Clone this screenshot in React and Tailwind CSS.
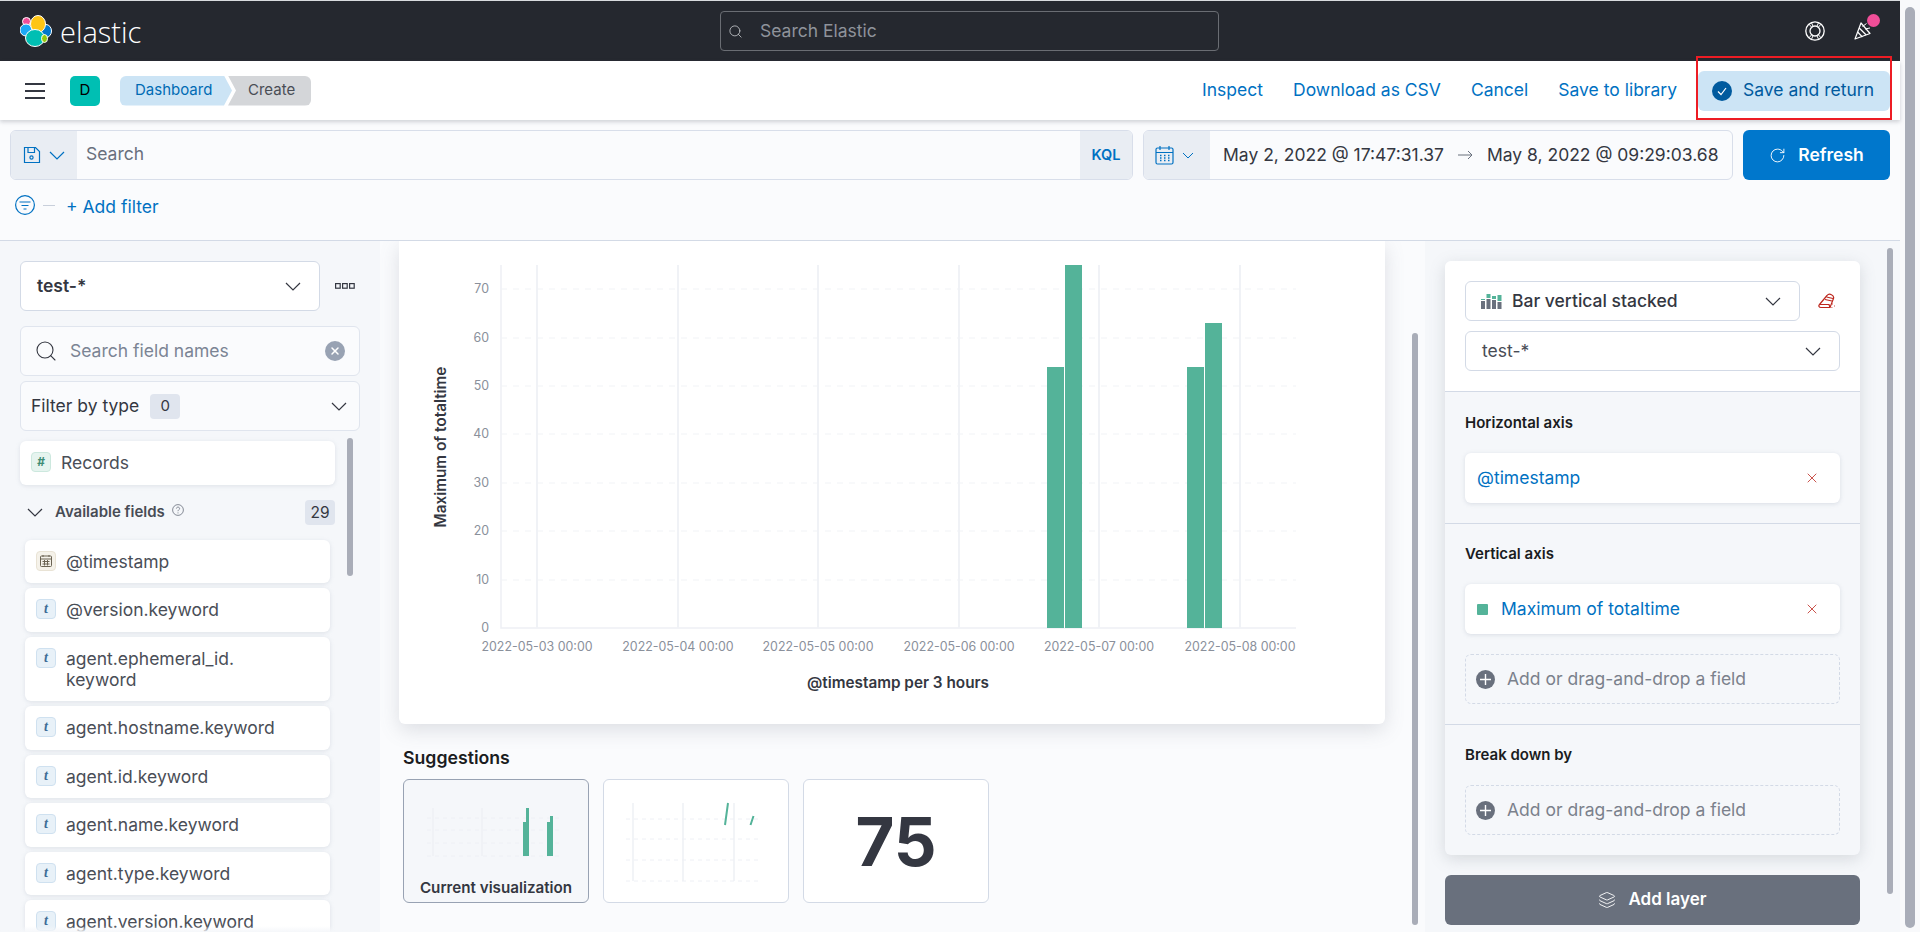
import { RotateCw, Layers, X, Search } from 'lucide-react'

const fields = [
  { name: 'agent.hostname.keyword', h: 'h-[44px]' },
  { name: 'agent.id.keyword', h: 'h-[43px]' },
  { name: 'agent.name.keyword', h: 'h-[44px]' },
  { name: 'agent.type.keyword', h: 'h-[43px]' },
  { name: 'agent.version.keyword', h: 'h-[44px]' },
]

const yTicks = [[70, 289], [60, 338], [50, 386], [40, 434], [30, 483], [20, 531], [10, 580]]
const xTicks = [
  [537, '2022-05-03 00:00'],
  [678, '2022-05-04 00:00'],
  [818, '2022-05-05 00:00'],
  [959, '2022-05-06 00:00'],
  [1099, '2022-05-07 00:00'],
  [1240, '2022-05-08 00:00'],
]
const bars = [[1047, 367], [1065, 265], [1187, 367], [1205, 323]]

function Chevron({ className = 'text-[#343741]' }) {
  return (
    <svg width="16" height="9" viewBox="0 0 16 9" fill="none" stroke="currentColor" strokeWidth="1.2" className={className}>
      <path d="M1 1l7 7 7-7" />
    </svg>
  )
}

function ElasticLogo() {
  return (
    <svg width="32" height="32" viewBox="0 0 32 32" className="shrink-0">
      <g stroke="#fff" strokeWidth="1">
        <ellipse cx="6.5" cy="6.5" rx="4" ry="4" fill="#f04e98" />
        <ellipse cx="6" cy="15" rx="6" ry="6" fill="#1ba9f5" />
        <ellipse cx="26" cy="16" rx="5.5" ry="6.5" fill="#0077cc" />
        <ellipse cx="18" cy="9" rx="7.5" ry="8.5" fill="#fec514" />
        <ellipse cx="15" cy="23" rx="9.5" ry="8.5" fill="#00bfb3" />
        <ellipse cx="24.5" cy="23.5" rx="3" ry="4" fill="#93c90e" />
      </g>
    </svg>
  )
}

function HelpRing() {
  return (
    <svg width="20" height="20" viewBox="0 0 20 20" fill="none" stroke="#fff" strokeWidth="1.3">
      <circle cx="10" cy="10" r="9.2" />
      <circle cx="10" cy="10" r="5" />
      <path d="M4 3.2l2.800 3.200M16 3.200l-2.800 3.200M4 16.800l2.800-3.200M16 16.800l-2.800-3.200M6.500 1.800l1.600 3.600M13.500 1.800l-1.600 3.600M6.500 18.200l1.600-3.600M13.500 18.200l-1.600-3.600" strokeWidth="1" />
    </svg>
  )
}

function CheerIcon() {
  return (
    <svg width="20" height="20" viewBox="0 0 20 20" fill="none" stroke="#fff" strokeWidth="1.2" strokeLinejoin="round">
      <path d="M8 2L2 18l15-5.500z" />
      <path d="M6.200 7l7 7M4.600 11l4.800 5" />
      <path d="M9.500 5.500l4-3M12 8l5-1" strokeWidth="1" />
    </svg>
  )
}

function SaveIcon() {
  return (
    <svg width="18" height="18" viewBox="0 0 18 18" fill="none" stroke="#0071c2" strokeWidth="1.2">
      <path d="M1.500 1.500h11l4 4v11h-15z" />
      <path d="M5 1.500v5h6.500v-5" />
      <circle cx="8.500" cy="11.500" r="1.600" />
    </svg>
  )
}

function CalendarIcon() {
  return (
    <svg width="19" height="20" viewBox="0 0 19 20" fill="none" stroke="#0071c2" strokeWidth="1.2">
      <rect x="1" y="3" width="17" height="16" rx="1.500" />
      <path d="M1 7.500h17M5 1v4M14 1v4" />
      <path d="M5 10.500h1.500M9 10.500h1.500M13 10.500h1.500M5 13h1.500M9 13h1.500M13 13h1.500M5 15.500h1.500M9 15.500h1.500M13 15.500h1.500" strokeWidth="1.3" />
    </svg>
  )
}

function FilterIcon() {
  return (
    <svg width="20" height="20" viewBox="0 0 20 20" fill="none" stroke="#0071c2" strokeWidth="1.2">
      <circle cx="10" cy="10" r="9.400" />
      <path d="M4.500 7h11M6.500 10.500h7M8.500 14h3" />
    </svg>
  )
}

function FieldIcon({ kind = 't' }) {
  if (kind === 'date') {
    return (
      <span className="flex h-[20px] w-[20px] shrink-0 items-center justify-center rounded-[4px] border border-[#e9e3d5] bg-[#f5f2ea]">
        <svg width="14" height="14" viewBox="0 0 14 14" fill="none" stroke="#6a6353" strokeWidth="1">
          <rect x="1.500" y="2" width="11" height="10.500" rx="1" />
          <path d="M1.500 5h11M4 1v2M10 1v2M3.500 7.500h7M3.500 10h7M5.500 6v5.500M8.500 6v5.500" />
        </svg>
      </span>
    )
  }
  if (kind === 'num') {
    return (
      <span className="flex h-[20px] w-[20px] shrink-0 items-center justify-center rounded-[4px] border border-[#cce8de] bg-[#e6f4ef] text-[12px] font-bold italic leading-none text-[#3f8c74]">
        #
      </span>
    )
  }
  return (
    <span className="flex h-[20px] w-[20px] shrink-0 items-center justify-center rounded-[4px] border border-[#cfe1f0] bg-[#e8f1f8] font-['Liberation_Serif',serif] text-[14px] font-bold italic leading-none text-[#3d6d96]">
      t
    </span>
  )
}

function FieldRow({ name, kind, h = 'h-[44px]' }) {
  return (
    <div className={`flex ${h} gap-[10px] rounded-[6px] bg-white pl-[11px] pt-[11px] shadow-[0_1px_4px_rgba(152,162,179,0.25)]`}>
      <FieldIcon kind={kind} />
      <span className="text-[17.5px] leading-[21px] text-[#4a4e57]">{name}</span>
    </div>
  )
}

function DropZone() {
  return (
    <div className="flex h-[50px] items-center gap-[12px] rounded-[6px] border border-dashed border-[#d3dae6] pl-[10px] text-[17.5px] text-[#7b818c]">
      <span className="flex h-[19px] w-[19px] items-center justify-center rounded-full bg-[#69707d]">
        <svg width="11" height="11" viewBox="0 0 11 11" stroke="#fff" strokeWidth="1.4"><path d="M5.500 0v11M0 5.500h11" /></svg>
      </span>
      Add or drag-and-drop a field
    </div>
  )
}

function Dimension({ children, color }) {
  return (
    <div className="flex h-[50px] items-center justify-between rounded-[6px] bg-white pl-[12px] pr-[20px] text-[17.5px] text-[#0071c2] shadow-[0_1px_4px_rgba(152,162,179,0.3)]">
      <span className="flex items-center gap-[13px]">
        {color && <span className="h-[11px] w-[11px] rounded-[1px] bg-[#54b399]" />}
        {children}
      </span>
      <X size={16} strokeWidth={1.2} className="text-[#bd271e]" />
    </div>
  )
}

function MainChart() {
  return (
    <svg viewBox="399 241 986 483" width="986" height="483" className="block font-['Inter',sans-serif]">
      <path d="M501 265V628H1296" fill="none" stroke="#eef0f5" strokeWidth="1.5" />
      {yTicks.map(([label, y]) => (
        <g key={label}>
          <line x1="501" x2="1296" y1={y} y2={y} stroke="#f1f3f6" strokeDasharray="6 6" />
          <text x="489" y={y + 4} textAnchor="end" fontSize="12.4" fill="#8a909b">{label}</text>
        </g>
      ))}
      <text x="489" y="632" textAnchor="end" fontSize="12.4" fill="#8a909b">0</text>
      {xTicks.map(([x, label]) => (
        <g key={label}>
          <line x1={x} x2={x} y1="265" y2="628" stroke="#f0f2f6" strokeWidth="2" />
          <text x={x} y="651" textAnchor="middle" fontSize="12.4" fill="#8a909b">{label}</text>
        </g>
      ))}
      {bars.map(([x, y]) => (
        <rect key={x} x={x} y={y} width="17" height={628 - y} fill="#54b399" />
      ))}
      <text transform="translate(446 447) rotate(-90)" textAnchor="middle" fontSize="15.3" fontWeight="600" fill="#343741">Maximum of totaltime</text>
      <text x="898" y="688" textAnchor="middle" fontSize="15.3" fontWeight="600" fill="#343741">@timestamp per 3 hours</text>
    </svg>
  )
}

function MiniBars() {
  return (
    <svg width="184" height="78" viewBox="404 780 184 78" className="block">
      <path d="M433 808v48M482 808v48" stroke="#eef0f5" strokeWidth="1.5" />
      <path d="M427 818h135M427 830h135M427 843h135M427 856h135" stroke="#eef0f5" strokeDasharray="4 4" />
      <rect x="523" y="822" width="3" height="34" fill="#54b399" />
      <rect x="526" y="808" width="3" height="48" fill="#54b399" />
      <rect x="547" y="822" width="3" height="34" fill="#54b399" />
      <rect x="550" y="816" width="3" height="40" fill="#54b399" />
    </svg>
  )
}

function MiniLines() {
  return (
    <svg width="184" height="122" viewBox="604 780 184 122" className="block">
      <path d="M633 803v78M683 803v78M734 803v78" stroke="#eef0f5" strokeWidth="1.5" />
      <path d="M626 819h136M626 839h136M626 860h136M626 881h136" stroke="#eef0f5" strokeDasharray="4 4" />
      <path d="M725 825l3-22M750.500 825l3-9" stroke="#54b399" strokeWidth="2" />
    </svg>
  )
}

function Scrollbar({ className }) {
  return <div className={`absolute w-[6px] rounded-full bg-[#a9adb8] ${className}`} />
}

export default function App() {
  return (
    <div className="relative flex h-[932px] w-[1920px] overflow-hidden bg-[#f8f9fb] font-['Inter',sans-serif] text-[#343741]">
      <div className="flex w-[1900px] flex-col">
        {/* Top bar */}
        <header className="flex h-[61px] shrink-0 items-center justify-between border-t border-[#d9dbde] bg-[#25282f] pl-[20px] pr-[15px]">
          <div className="flex w-[700px] items-center gap-[8px]">
            <ElasticLogo />
            <span className="font-['Open_Sans',sans-serif] text-[29px] font-light leading-none text-white">elastic</span>
          </div>
          <div className="flex h-[40px] w-[499px] items-center gap-[17px] rounded-[4px] border border-[#6a6d73] pl-[7px] text-[17.5px] text-[#8f939b]">
            <Search size={15} strokeWidth={1.3} className="text-[#c9cbcf]" />
            Search Elastic
          </div>
          <div className="flex w-[666px] items-center justify-end gap-[28px] pr-[12px]">
            <HelpRing />
            <span className="relative block h-[20px] w-[20px]">
              <CheerIcon />
              <span className="absolute -right-[7px] -top-[7px] h-[13px] w-[13px] rounded-full bg-[#f04e98]" />
            </span>
          </div>
        </header>

        {/* App nav */}
        <nav className="relative z-10 flex h-[59px] shrink-0 items-center justify-between bg-white pl-[25px] pr-[10px] shadow-[0_2px_4px_rgba(105,112,125,0.3)]">
          <div className="flex items-center">
            <div className="flex w-[20px] flex-col gap-[5px]">
              <span className="h-[2px] bg-[#343741]" />
              <span className="h-[2px] bg-[#343741]" />
              <span className="h-[2px] bg-[#343741]" />
            </div>
            <span className="ml-[25px] flex h-[30px] w-[30px] items-center justify-center rounded-[5px] bg-[#00bfb3] text-[15px] text-black">D</span>
            <div className="ml-[20px] flex h-[30px] text-[15px]">
              <span className="flex w-[112px] items-center rounded-l-[6px] bg-[#cce4f5] pl-[15px] text-[#006bb4] [clip-path:polygon(0_0,104px_0,112px_50%,104px_100%,0_100%)]">Dashboard</span>
              <span className="-ml-[4px] flex w-[83px] items-center rounded-r-[6px] bg-[#d4d6d9] pl-[20px] text-[#494d55] [clip-path:polygon(0_0,100%_0,100%_100%,0_100%,8px_50%)]">Create</span>
            </div>
          </div>
          <div className="flex items-center text-[17.5px] text-[#0071c2]">
            <span>Inspect</span>
            <span className="ml-[30px]">Download as CSV</span>
            <span className="ml-[30px]">Cancel</span>
            <span className="ml-[30px]">Save to library</span>
            <span className="ml-[21px] flex h-[40px] w-[192px] items-center gap-[11px] rounded-[6px] bg-[#cce4f5] pl-[14px] text-[#005a9e]">
              <svg width="20" height="20" viewBox="0 0 20 20" className="shrink-0">
                <circle cx="10" cy="10" r="10" fill="#005a9e" />
                <path d="M6 10.500l3 3 5-6.500" fill="none" stroke="#fff" strokeWidth="1.2" />
              </svg>
              Save and return
            </span>
          </div>
        </nav>

        {/* Query bar */}
        <section className="h-[121px] shrink-0 border-b border-[#d3dae6] bg-[#fafbfd] px-[10px] pt-[10px]">
          <div className="flex h-[50px] gap-[10px]">
            <div className="flex w-[1123px] overflow-hidden rounded-[6px] border border-[#d8deea]">
              <div className="flex w-[66px] items-center gap-[8px] bg-[#e9edf3] pl-[12px]">
                <SaveIcon />
                <Chevron className="text-[#0071c2]" />
              </div>
              <div className="flex flex-1 items-center pb-[2px] pl-[9px] text-[17.5px] text-[#69707d]">Search</div>
              <div className="flex w-[52px] items-center justify-center bg-[#e9edf3] text-[14.5px] font-semibold text-[#0071c2]">KQL</div>
            </div>
            <div className="flex w-[590px] overflow-hidden rounded-[6px] border border-[#d8deea]">
              <div className="flex w-[66px] items-center gap-[8px] bg-[#e9edf3] pl-[11px]">
                <CalendarIcon />
                <svg width="12" height="7" viewBox="0 0 12 7" fill="none" stroke="#0071c2" strokeWidth="1"><path d="M1 1l5 5 5-5" /></svg>
              </div>
              <div className="flex flex-1 items-center pl-[13px] text-[17.5px] text-[#343741]">
                <span>May 2, 2022 @ 17:47:31.37</span>
                <svg width="15" height="10" viewBox="0 0 15 10" fill="none" stroke="#69707d" className="mx-[14px] shrink-0"><path d="M0 5h14M10 1l4 4-4 4" /></svg>
                <span>May 8, 2022 @ 09:29:03.68</span>
              </div>
            </div>
            <div className="flex w-[147px] items-center justify-center gap-[12px] rounded-[6px] bg-[#0077cc] text-[17.5px] font-semibold text-white">
              <RotateCw size={17} strokeWidth={1.3} />
              Refresh
            </div>
          </div>
          <div className="mt-[15px] flex h-[20px] items-center pl-[5px]">
            <FilterIcon />
            <span className="ml-[8px] h-[1px] w-[12px] bg-[#c8cfdb]" />
            <span className="ml-[11px] mt-[4px] text-[17.5px] text-[#0071c2]">+ Add filter</span>
          </div>
        </section>

        <main className="flex min-h-0 flex-1">
          {/* Field list */}
          <aside className="relative w-[380px] shrink-0 overflow-hidden bg-[#f5f7fa] pl-[20px] pt-[20px]">
            <div className="flex items-center">
              <div className="flex h-[50px] w-[300px] items-center justify-between rounded-[6px] border border-[#d3dae6] bg-white pl-[16px] pr-[18px] text-[17.5px] font-semibold">
                test-*
                <Chevron />
              </div>
              <svg width="20" height="6" viewBox="0 0 20 6" fill="none" stroke="#343741" strokeWidth="1.2" className="ml-[15px]">
                <rect x="0.600" y="0.600" width="4.600" height="4.600" />
                <rect x="7.600" y="0.600" width="4.600" height="4.600" />
                <rect x="14.600" y="0.600" width="4.600" height="4.600" />
              </svg>
            </div>
            <div className="mt-[15px] flex h-[50px] w-[340px] items-center rounded-[6px] border border-[#e0e5ee] bg-[#fafbfd] pl-[13px] pr-[14px] text-[17.5px] text-[#7b8494]">
              <Search size={24} strokeWidth={1.1} className="text-[#343741]" />
              <span className="ml-[12px] flex-1">Search field names</span>
              <span className="flex h-[20px] w-[20px] items-center justify-center rounded-full bg-[#98a2b3]">
                <X size={12} strokeWidth={3} className="text-white" />
              </span>
            </div>
            <div className="mt-[5px] flex h-[50px] w-[340px] items-center rounded-[6px] border border-[#e0e5ee] bg-[#fafbfd] pl-[10px] pr-[12px] text-[17.5px]">
              Filter by type
              <span className="ml-[11px] flex h-[25px] w-[30px] items-center justify-center rounded-[4px] bg-[#e0e5ee] text-[15px]">0</span>
              <span className="ml-auto"><Chevron /></span>
            </div>
            <div className="mt-[10px] w-[315px]">
              <FieldRow name="Records" kind="num" />
              <div className="mt-[15px] flex h-[25px] items-center">
                <span className="ml-[7px]"><Chevron /></span>
                <span className="ml-[12px] text-[15px] font-semibold text-[#484c55]">Available fields</span>
                <svg width="12" height="12" viewBox="0 0 12 12" fill="none" stroke="#69707d" strokeWidth="0.8" className="ml-[7px] mb-[6px]">
                  <circle cx="6" cy="6" r="5.400" />
                  <path d="M4.400 4.600c0-2 3.200-2 3.200 0 0 1.200-1.600 1.200-1.600 2.600M6 8.400v1" />
                </svg>
                <span className="ml-auto flex h-[25px] w-[30px] items-center justify-center rounded-[4px] bg-[#e0e5ee] text-[15.5px]">29</span>
              </div>
              <div className="mt-[15px] flex w-[305px] translate-x-[5px] flex-col gap-[5px]">
                <FieldRow name="@timestamp" kind="date" h="h-[43px]" />
                <FieldRow name="@version.keyword" />
                <FieldRow name={<>agent.ephemeral_id.<br />keyword</>} h="h-[64px]" />
                {fields.map((f) => (
                  <FieldRow key={f.name} name={f.name} h={f.h} />
                ))}
              </div>
            </div>
            <Scrollbar className="left-[347px] top-[197px] h-[138px]" />
            <div className="absolute bottom-0 left-0 h-[6px] w-full bg-gradient-to-b from-transparent to-[#f5f7fa]" />
          </aside>

          {/* Workspace */}
          <div className="relative w-[1045px] shrink-0 overflow-hidden bg-[#fafbfd] pl-[19px]">
            <div className="w-[986px] rounded-b-[6px] bg-white shadow-[0_6px_20px_rgba(105,112,125,0.2)]">
              <MainChart />
            </div>
            <h3 className="mt-[24px] pl-[4px] text-[17.7px] font-semibold leading-[20px] text-[#1a1c21]">Suggestions</h3>
            <div className="mt-[11px] flex gap-[14px] pl-[4px]">
              <div className="h-[124px] w-[186px] overflow-hidden rounded-[6px] border border-[#98a2b3] bg-[#f5f7fa]">
                <MiniBars />
                <div className="mt-[21px] text-center text-[15.2px] font-semibold leading-[18px]">Current visualization</div>
              </div>
              <div className="h-[124px] w-[186px] overflow-hidden rounded-[6px] border border-[#d3dae6] bg-white">
                <MiniLines />
              </div>
              <div className="flex h-[124px] w-[186px] items-center justify-center rounded-[6px] border border-[#d3dae6] bg-white text-[67px] font-bold leading-none">75</div>
            </div>
            <Scrollbar className="right-[7px] top-[92px] h-[592px]" />
          </div>

          {/* Layer config */}
          <aside className="relative flex-1 overflow-hidden bg-[#f5f7fa] pl-[20px] pt-[20px]">
            <div className="w-[415px] rounded-[6px] bg-[#f5f7fa] shadow-[0_4px_16px_rgba(105,112,125,0.22)]">
              <div className="h-[131px] rounded-t-[6px] border-b border-[#d3dae6] bg-white px-[20px] pt-[20px]">
                <div className="flex items-center">
                  <div className="flex h-[40px] w-[335px] items-center rounded-[6px] border border-[#d3dae6] pl-[15px] pr-[18px] text-[17.5px] font-medium">
                    <svg width="21" height="16" viewBox="0 0 21 16" className="mr-[10px] shrink-0">
                      <path d="M0 8h4v8H0zM5.500 6h4v10h-4zM11 7h4v9h-4zM16.500 9h4v7h-4z" fill="#69707d" />
                      <path d="M5.500 1h4v4h-4zM11 3h4v3h-4zM16.500 2h4v6h-4zM0 6h4v1H0z" fill="#54b399" />
                    </svg>
                    Bar vertical stacked
                    <span className="ml-auto"><Chevron /></span>
                  </div>
                  <svg width="18" height="16" viewBox="0 0 18 16" fill="none" stroke="#bd271e" strokeWidth="1.2" className="ml-[18px]">
                    <path d="M1.500 11.500L9 2.500c1-1.300 3-1.600 4.500-.8 1.600.8 2.500 2.500 1.900 4L12 14.500H3c-2 0-2.800-1.600-1.500-3z" />
                    <path d="M1.500 11.500h9.500l1 3M8.500 4l6.500 1.500M7 6.500l7 1.500" />
                    <path d="M14 11h.8M16 13h.8M13.500 14.500h.8" strokeWidth="1" />
                  </svg>
                </div>
                <div className="mt-[10px] flex h-[40px] items-center justify-between rounded-[6px] border border-[#d3dae6] pl-[16px] pr-[18px] text-[17.5px] text-[#484c55]">
                  test-*
                  <Chevron />
                </div>
              </div>

              <div className="h-[132px] border-b border-[#d3dae6] px-[20px] pt-[21px]">
                <div className="text-[15px] font-semibold leading-[20px] text-[#1a1c21]">Horizontal axis</div>
                <div className="mt-[20px]"><Dimension>@timestamp</Dimension></div>
              </div>

              <div className="h-[201px] border-b border-[#d3dae6] px-[20px] pt-[20px]">
                <div className="text-[15px] font-semibold leading-[20px] text-[#1a1c21]">Vertical axis</div>
                <div className="mt-[20px]"><Dimension color>Maximum of totaltime</Dimension></div>
                <div className="mt-[20px]"><DropZone /></div>
              </div>

              <div className="h-[130px] px-[20px] pt-[20px]">
                <div className="text-[15px] font-semibold leading-[20px] text-[#1a1c21]">Break down by</div>
                <div className="mt-[20px]"><DropZone /></div>
              </div>
            </div>
            <div className="mt-[20px] flex h-[50px] w-[415px] items-center justify-center gap-[12px] rounded-[6px] bg-[#69707d] text-[17px] font-semibold text-white">
              <Layers size={18} strokeWidth={1.2} />
              Add layer
            </div>
            <Scrollbar className="left-[462px] top-[7px] h-[646px]" />
          </aside>
        </main>
      </div>

      {/* Page scrollbar */}
      <div className="relative w-[20px] shrink-0 bg-[#f8f9fb]">
        <div className="absolute left-[5px] top-[7px] h-[921px] w-[10px] rounded-full bg-[#a9adb8]" />
      </div>

      {/* Red highlight round the save button */}
      <div className="absolute left-[1696px] top-[56px] z-20 h-[64px] w-[196px] border-2 border-[#ed1c24]" />
    </div>
  )
}
